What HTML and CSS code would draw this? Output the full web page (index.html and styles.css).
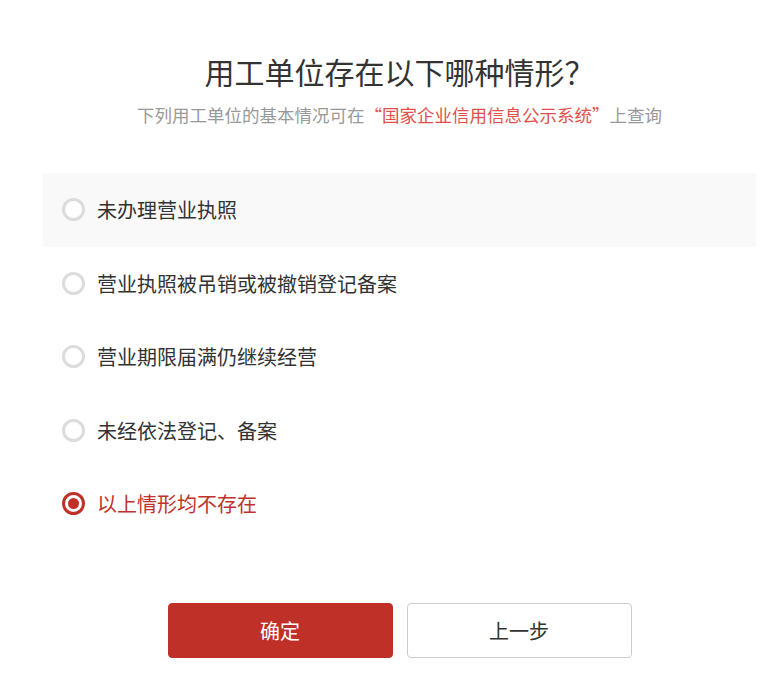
FILE: index.html
```html
<!DOCTYPE html>
<html lang="zh-CN">
<head>
<meta charset="utf-8">
<title>用工单位存在以下哪种情形？</title>
<link rel="stylesheet" href="styles.css">
</head>
<body>
<div class="page">
  <header class="head">
    <h1 class="title">用工单位存在以下哪种情形？</h1>
    <p class="sub">下列用工单位的基本情况可在<span class="hl">“国家企业信用信息公示系统”</span>上查询</p>
  </header>
  <ul class="options">
    <li class="opt hover"><span class="radio"></span><span class="label">未办理营业执照</span></li>
    <li class="opt"><span class="radio"></span><span class="label">营业执照被吊销或被撤销登记备案</span></li>
    <li class="opt"><span class="radio"></span><span class="label">营业期限届满仍继续经营</span></li>
    <li class="opt"><span class="radio"></span><span class="label">未经依法登记、备案</span></li>
    <li class="opt checked"><span class="radio"></span><span class="label">以上情形均不存在</span></li>
  </ul>
  <div class="actions">
    <button class="btn primary">确定</button>
    <button class="btn ghost">上一步</button>
  </div>
</div>
</body>
</html>
```
FILE: styles.css
```css
html, body {
  margin: 0;
  padding: 0;
  background: #fff;
}
body {
  font-family: "Noto Sans CJK SC", "Noto Sans", sans-serif;
  color: #333;
}
.page {
  width: 713px;
  margin-left: 43px;
  padding-top: 49px;
}
.head {
  text-align: center;
}
.title {
  margin: 0;
  font-size: 30px;
  font-weight: 400;
  line-height: 44px;
  color: #333;
}
.sub {
  margin: 7px 0 0;
  font-size: 17.5px;
  line-height: 30px;
  color: #999;
}
.hl {
  color: #e0504a;
}
.options {
  list-style: none;
  margin: 43px 0 0;
  padding: 0;
}
.opt {
  display: flex;
  align-items: center;
  height: 73.5px;
  padding-left: 19px;
  gap: 12px;
  font-size: 20px;
  color: #333;
}
.opt.hover {
  background: #f9f9f9;
}
.radio {
  width: 23px;
  height: 23px;
  box-sizing: border-box;
  border: 3px solid #dcdcdf;
  border-radius: 50%;
  background: #fff;
  position: relative;
}
.opt.checked .radio {
  border-color: #bf3028;
}
.opt.checked .radio::after {
  content: "";
  position: absolute;
  left: 50%;
  top: 50%;
  width: 11px;
  height: 11px;
  margin: -5.5px 0 0 -5.5px;
  border-radius: 50%;
  background: #bf3028;
}
.opt.checked .label {
  color: #c0332b;
}
.actions {
  display: flex;
  justify-content: center;
  gap: 14px;
  margin-top: 62px;
}
.btn {
  width: 225px;
  height: 55px;
  border-radius: 4px;
  font-family: inherit;
  font-size: 20px;
  cursor: pointer;
  box-sizing: border-box;
}
.primary {
  background: #bf3028;
  border: 1px solid #bf3028;
  color: #fff;
}
.ghost {
  background: #fff;
  border: 1px solid #ccc;
  color: #333;
}
```
